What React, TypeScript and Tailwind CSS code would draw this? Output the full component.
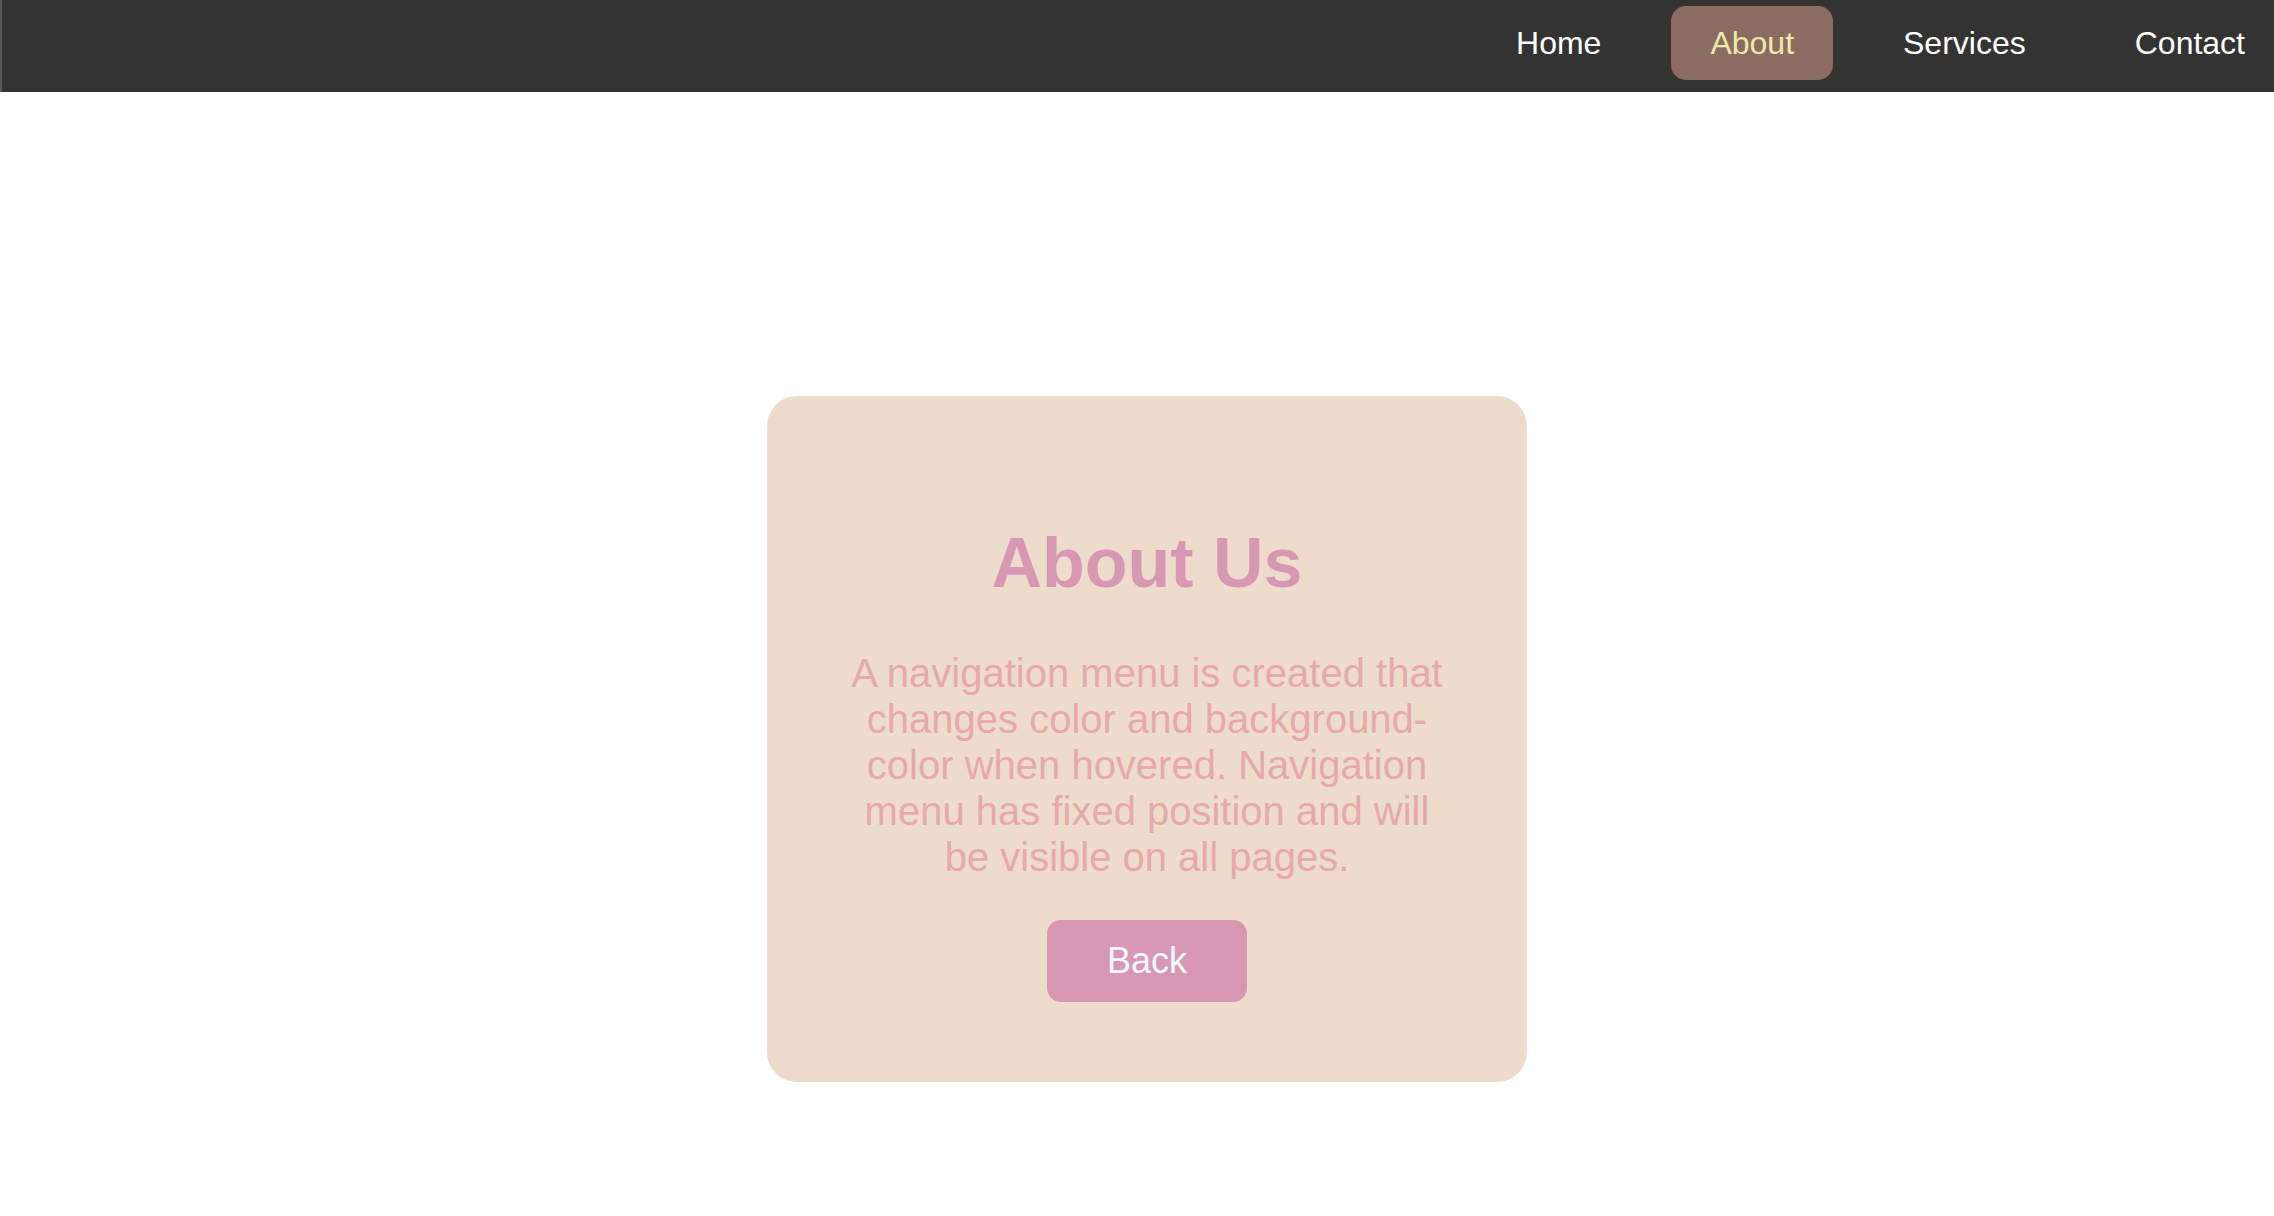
export default function App() {
  const items = ["Home", "About", "Services", "Contact"];
  return (
    <div
      className="w-[2294px] h-[1216px] overflow-hidden bg-white"
      style={{ fontFamily: '"Liberation Sans", Arial, sans-serif' }}
    >
      <nav className="h-[92px] bg-[#333333] border-l-2 border-[#5a5a5a] flex justify-end items-start pt-[6px] pr-[10px]">
        <ul className="flex gap-[31px]">
          {items.map((it) => (
            <li key={it}>
              <a
                href="#"
                className={
                  it === "About"
                    ? "block px-[39px] py-[18.5px] text-[32px] leading-[normal] rounded-[15px] bg-[#8a6d60] text-[#eee8aa]"
                    : "block px-[39px] py-[18.5px] text-[32px] leading-[normal] rounded-[15px] text-white"
                }
              >
                {it}
              </a>
            </li>
          ))}
        </ul>
      </nav>
      <main className="pt-[304px] flex justify-center">
        <div className="w-[760px] bg-[#eddccb] rounded-[30px] px-[80px] py-[80px] flex flex-col items-center text-center">
          <h1 className="text-[70px] font-bold leading-[80px] text-[#d898b4] mt-[47px] mb-[47px]">
            About Us
          </h1>
          <p className="text-[40px] leading-[46px] text-[#e8a9ac]">
            A navigation menu is created that changes color and background-color when hovered. Navigation menu has fixed position and will be visible on all pages.
          </p>
          <button className="mt-[40px] px-[60px] py-[20px] text-[36px] leading-[42px] rounded-[14px] bg-[#d898b2] text-[#f0f8ff]">
            Back
          </button>
        </div>
      </main>
    </div>
  );
}
